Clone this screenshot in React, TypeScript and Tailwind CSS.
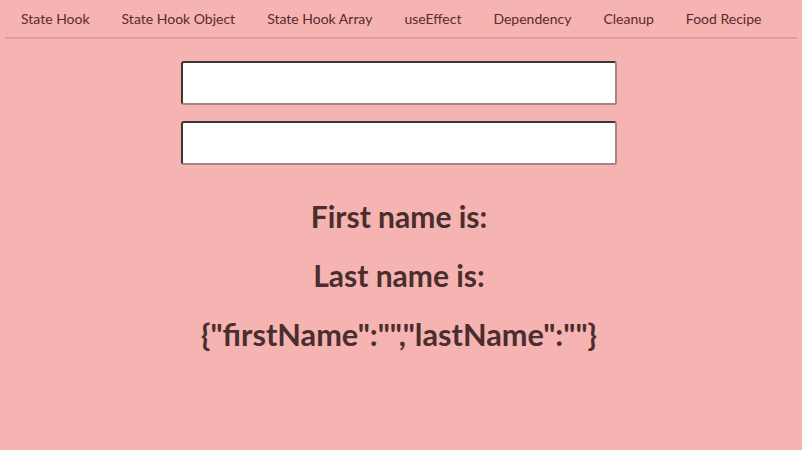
import React from "react";

const links = ["State Hook", "State Hook Object", "State Hook Array", "useEffect", "Dependency", "Cleanup", "Food Recipe"];

export default function App() {
  return (
    <div className="min-h-[450px] w-full bg-[#f5b3b1] text-[#4a2d2d]" style={{ fontFamily: "Lato, 'Noto Sans', sans-serif" }}>
      <nav className="mx-[5px] flex h-[39px] items-center border-b-2 border-[#e09c9a] pl-[16px]">
        {links.map((l) => (
          <a key={l} className="mr-[32px] text-[14px] text-[#5a2a2c]">{l}</a>
        ))}
      </nav>
      <div className="flex flex-col items-center pt-[22px] pr-[4px]">
        <input className="h-[44px] w-[436px] rounded-[3px] border-2 border-t-[#3d3535] border-l-[#3d3535] border-b-[#a88583] border-r-[#a88583] bg-white" />
        <input className="mt-[16px] h-[44px] w-[436px] rounded-[3px] border-2 border-t-[#3d3535] border-l-[#3d3535] border-b-[#a88583] border-r-[#a88583] bg-white" />
        <h2 className="mt-[33px] text-[30px] font-bold leading-[36px]">First name is:</h2>
        <h2 className="mt-[23px] text-[30px] font-bold leading-[36px]">Last name is:</h2>
        <h2 className="mt-[24px] text-[30.7px] font-bold leading-[36px]">{'{"firstName":"","lastName":""}'}</h2>
      </div>
    </div>
  );
}
